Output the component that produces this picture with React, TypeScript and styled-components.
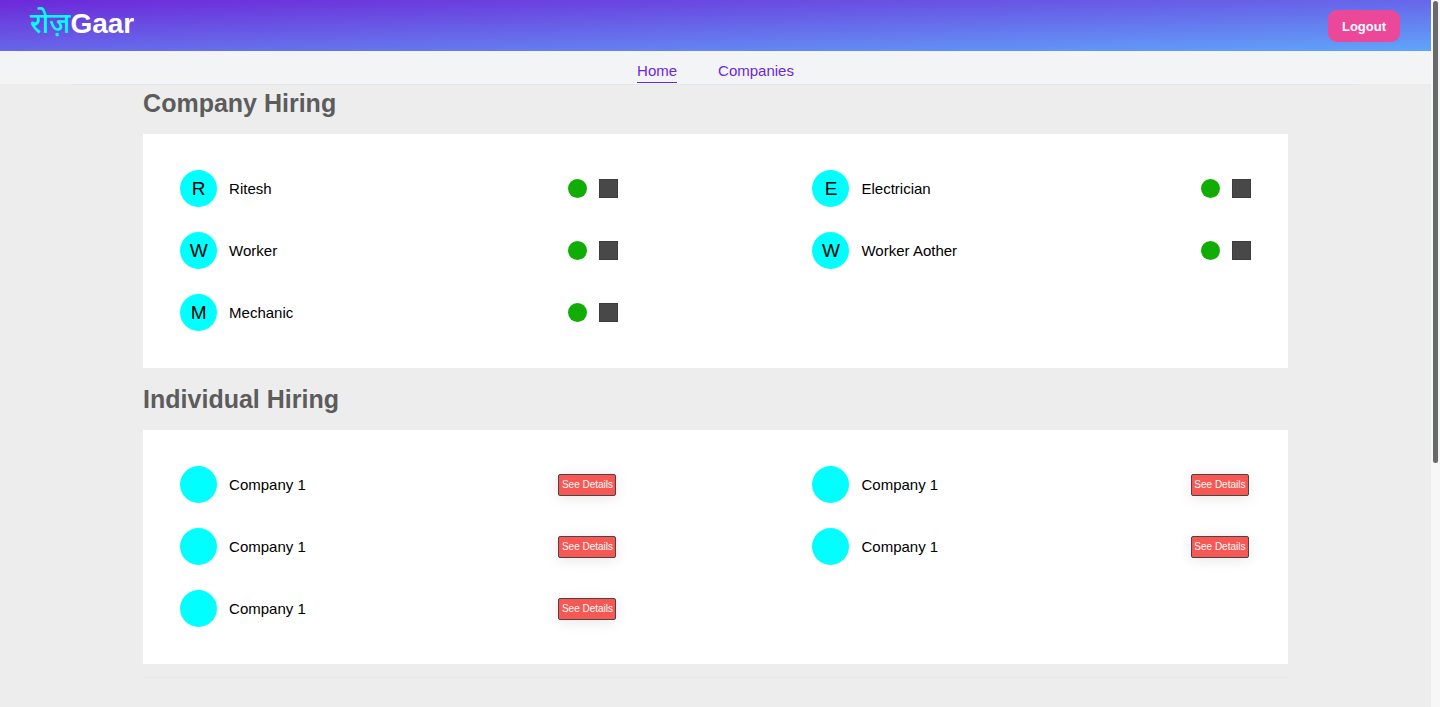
import React from "react";
import styled, { createGlobalStyle } from "styled-components";

const GlobalStyle = createGlobalStyle`
  *, *::before, *::after { box-sizing: border-box; }
  body {
    margin: 0;
    background: #ededed;
    color: #000;
    font-family: "Liberation Sans", Arial, "Noto Sans", sans-serif;
  }
`;

const Shell = styled.div`
  display: flex;
  align-items: flex-start;
  height: 100vh;
  overflow: hidden;
`;

const Page = styled.div`
  flex: 1;
  min-width: 0;
`;

const ScrollTrack = styled.div`
  flex: none;
  width: 9px;
  height: 100vh;
  padding: 1px 2px;
  background: #f7f7f7;
`;

const ScrollThumb = styled.div`
  width: 5px;
  height: 65.5%;
  border-radius: 3px;
  background: #68696a;
`;

const Header = styled.header`
  display: flex;
  align-items: center;
  justify-content: space-between;
  height: 51px;
  padding: 0 31px 0 30px;
  background: linear-gradient(to bottom right, #6d28d9, #60a5fa);
`;

const Logo = styled.a`
  padding-bottom: 4px;
  color: #fff;
  font-size: 28px;
  font-weight: 700;
  line-height: 40px;
  text-decoration: none;
`;

const LogoAccent = styled.span`
  color: #00ffff;
  font-weight: 500;
`;

const LogoutButton = styled.button`
  height: 32px;
  padding: 1px 14px 0;
  border: 0;
  border-radius: 9px;
  background: #ec4899;
  color: #fff;
  font: 700 13px "Liberation Sans", Arial, sans-serif;
  cursor: pointer;
`;

const Nav = styled.nav`
  display: flex;
  justify-content: center;
  align-items: flex-end;
  gap: 41px;
  height: 33px;
  padding-bottom: 1px;
  background: #f3f4f6;
`;

const NavLink = styled.a<{ $active?: boolean }>`
  border-bottom: 1px solid ${(p) => (p.$active ? "#6d28d9" : "transparent")};
  color: #6d28d9;
  font-size: 15px;
  line-height: 23px;
  text-decoration: none;
`;

const Divider = styled.hr<{ $width: string }>`
  width: ${(p) => p.$width};
  height: 1px;
  margin: 0 auto;
  border: 0;
  background: #e5e7eb;
`;

const Main = styled.main`
  display: flex;
  flex-direction: column;
  gap: 13px;
`;

const Section = styled.section`
  width: 80%;
  margin: 0 auto;
`;

const SectionTitle = styled.h2`
  margin: 0 0 13px;
  color: #5c5c5c;
  font-size: 25px;
  line-height: 36px;
`;

const Card = styled.ul`
  display: grid;
  grid-template-columns: 1fr 1fr;
  gap: 25px 194px;
  margin: 0;
  padding: 36px 37px 37px;
  background: #fff;
  list-style: none;
`;

const Row = styled.li`
  display: flex;
  align-items: center;
  gap: 12px;
  height: 37px;
`;

const Avatar = styled.span`
  display: grid;
  place-items: center;
  flex: none;
  width: 37px;
  height: 37px;
  border-radius: 50%;
  background: #00ffff;
  font-size: 19px;
`;

const Name = styled.span`
  flex: 1;
  font-size: 15px;
`;

const StatusDot = styled.span`
  width: 19px;
  height: 19px;
  border-radius: 50%;
  background: #11ad05;
`;

const StatusSquare = styled.span`
  width: 19px;
  height: 19px;
  border: 1px solid #3c3c3c;
  background: #484848;
`;

const DetailsButton = styled.button`
  width: 58px;
  height: 22px;
  margin-right: 2px;
  padding: 0;
  border: 1px solid #4a4444;
  border-radius: 2px;
  background: #f75853;
  box-shadow: 0 2px 14px rgba(0, 0, 0, 0.1);
  color: #fff;
  font: 10px "Liberation Sans", Arial, sans-serif;
  cursor: pointer;
`;

const workers = ["Ritesh", "Electrician", "Worker", "Worker Aother", "Mechanic"];
const companies = ["Company 1", "Company 1", "Company 1", "Company 1", "Company 1"];

export default function App() {
  return (
    <>
      <GlobalStyle />
      <Shell>
        <Page>
          <Header>
            <Logo href="#">
              <LogoAccent lang="hi">रोज़</LogoAccent>Gaar
            </Logo>
            <LogoutButton type="button">Logout</LogoutButton>
          </Header>
          <Nav>
            <NavLink href="#home" $active>Home</NavLink>
            <NavLink href="#companies">Companies</NavLink>
          </Nav>
          <Divider $width="90%" />
          <Main>
            <Section>
              <SectionTitle>Company Hiring</SectionTitle>
              <Card>
                {workers.map((name) => (
                  <Row key={name}>
                    <Avatar>{name[0]}</Avatar>
                    <Name>{name}</Name>
                    <StatusDot />
                    <StatusSquare />
                  </Row>
                ))}
              </Card>
            </Section>
            <Section>
              <SectionTitle>Individual Hiring</SectionTitle>
              <Card>
                {companies.map((name, i) => (
                  <Row key={i}>
                    <Avatar />
                    <Name>{name}</Name>
                    <DetailsButton type="button">See Details</DetailsButton>
                  </Row>
                ))}
              </Card>
            </Section>
            <Divider $width="80%" />
          </Main>
        </Page>
        <ScrollTrack>
          <ScrollThumb />
        </ScrollTrack>
      </Shell>
    </>
  );
}
